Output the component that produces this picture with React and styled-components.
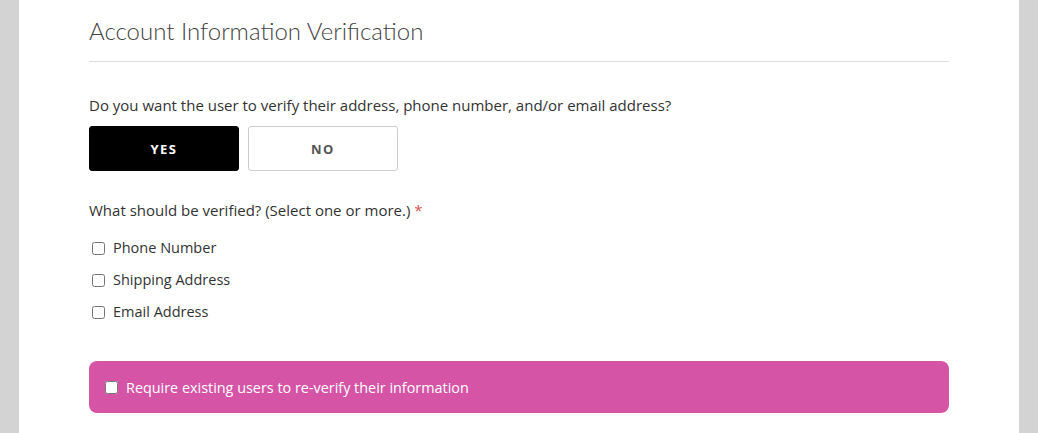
import styled, { createGlobalStyle } from "styled-components";

const GlobalStyle = createGlobalStyle`
  html, body {
    margin: 0;
    padding: 0;
    background: #d3d3d3;
  }
  body {
    font-family: "Open Sans", "Liberation Sans", sans-serif;
    color: #333;
  }
`;

const Page = styled.div`
  height: 433px;
  overflow: hidden;
  padding: 0 19px;
`;

const Panel = styled.div`
  background: #fff;
  height: 100%;
  padding: 0 70px;
`;

const Title = styled.h2`
  margin: 0;
  padding-top: 15px;
  padding-bottom: 15px;
  font-family: "Lato", "Liberation Sans", sans-serif;
  font-weight: 300;
  font-size: 24px;
  line-height: 31px;
  color: #444;
  border-bottom: 1px solid #dcdcdc;
`;

const Question = styled.p`
  margin: ${(p) => p.$top || 33}px 0 11px;
  font-size: 15px;
  line-height: 20px;
  color: #333;

  span {
    color: #d9534f;
  }
`;

const Choices = styled.div`
  display: flex;
  gap: 9px;
`;

const Choice = styled.button`
  width: 150px;
  height: 45px;
  border-radius: 3px;
  border: 1px solid ${(p) => (p.$active ? "#000" : "#ccc")};
  background: ${(p) => (p.$active ? "#000" : "#fff")};
  color: ${(p) => (p.$active ? "#fff" : "#555")};
  font-family: "Open Sans", "Liberation Sans", sans-serif;
  font-weight: 700;
  font-size: 13px;
  letter-spacing: 1.5px;
  cursor: pointer;
`;

const Checks = styled.div`
  display: flex;
  flex-direction: column;
  gap: 12px;
  margin-top: 18px;
`;

const CheckRow = styled.label`
  display: flex;
  align-items: center;
  gap: 8px;
  font-size: 14.5px;
  line-height: 20px;
  color: #333;

  input {
    margin: 0 0 0 3px;
    width: 13px;
    height: 13px;
  }
`;

const Notice = styled.label`
  display: flex;
  align-items: center;
  gap: 8px;
  margin-top: 39px;
  height: 52px;
  padding: 0 16px;
  border-radius: 8px;
  background: #d654a6;
  color: #fff;
  font-size: 14.4px;

  input {
    margin: 0;
    width: 13px;
    height: 13px;
  }
`;

function App() {
  const fields = ["Phone Number", "Shipping Address", "Email Address"];

  return (
    <>
      <GlobalStyle />
      <Page>
        <Panel>
          <Title>Account Information Verification</Title>
          <Question>
            Do you want the user to verify their address, phone number, and/or email address?
          </Question>
          <Choices>
            <Choice $active>YES</Choice>
            <Choice>NO</Choice>
          </Choices>
          <Question $top={29}>
            What should be verified? (Select one or more.) <span>*</span>
          </Question>
          <Checks>
            {fields.map((f) => (
              <CheckRow key={f}>
                <input type="checkbox" />
                {f}
              </CheckRow>
            ))}
          </Checks>
          <Notice>
            <input type="checkbox" />
            Require existing users to re-verify their information
          </Notice>
        </Panel>
      </Page>
    </>
  );
}

export default App;
